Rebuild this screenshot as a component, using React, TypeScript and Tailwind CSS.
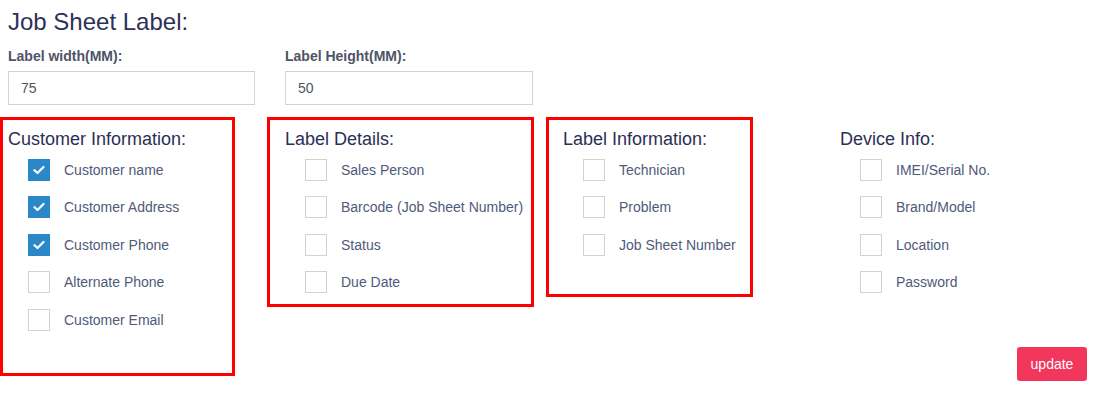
import { useState } from "react";

type Item = { label: string; checked?: boolean };

const customerInfo: Item[] = [
  { label: "Customer name", checked: true },
  { label: "Customer Address", checked: true },
  { label: "Customer Phone", checked: true },
  { label: "Alternate Phone" },
  { label: "Customer Email" },
];

const labelDetails: Item[] = [
  { label: "Sales Person" },
  { label: "Barcode (Job Sheet Number)" },
  { label: "Status" },
  { label: "Due Date" },
];

const labelInformation: Item[] = [
  { label: "Technician" },
  { label: "Problem" },
  { label: "Job Sheet Number" },
];

const deviceInfo: Item[] = [
  { label: "IMEI/Serial No." },
  { label: "Brand/Model" },
  { label: "Location" },
  { label: "Password" },
];

function CheckRow({ item }: { item: Item }) {
  const [checked, setChecked] = useState(!!item.checked);
  return (
    <label
      className="flex h-[37.5px] cursor-pointer items-center"
      onClick={() => setChecked(!checked)}
    >
      <span
        className={`ml-[20px] flex h-[22px] w-[22px] items-center justify-center ${
          checked ? "bg-[#2a88c8]" : "border border-[#d6d1cb] bg-white"
        }`}
      >
        {checked && (
          <svg width="12" height="10" viewBox="0 0 12 10" fill="none">
            <path
              d="M1.5 5.2 L4.5 8 L10.5 2"
              stroke="white"
              strokeWidth="2.2"
              strokeLinecap="round"
              strokeLinejoin="round"
            />
          </svg>
        )}
      </span>
      <span className="ml-[14px] text-[14px] leading-5 text-[#4f5a7a]">{item.label}</span>
    </label>
  );
}

function Group({ title, items }: { title: string; items: Item[] }) {
  return (
    <div>
      <h3 className="mb-[2px] text-[18px] leading-5 text-[#2c2f55]">{title}</h3>
      {items.map((item) => (
        <CheckRow key={item.label} item={item} />
      ))}
    </div>
  );
}

export default function App() {
  return (
    <div
      className="h-[396px] w-[1096px] overflow-hidden bg-white pt-[8px]"
      style={{ fontFamily: '"Liberation Sans", Arial, sans-serif' }}
    >
      <h1 className="pl-[8px] text-[24px] leading-7 text-[#2e3057]">Job Sheet Label:</h1>

      <div className="mt-[10px] flex pl-[8px]">
        <div className="w-[277px]">
          <div className="text-[14px] font-bold leading-5 text-[#4e5466]">Label width(MM):</div>
          <input
            defaultValue="75"
            className="mt-[5px] h-[34px] w-[247px] border border-[#cfd3dc] px-[12px] text-[14px] text-[#555] outline-none"
          />
        </div>
        <div>
          <div className="text-[14px] font-bold leading-5 text-[#4e5466]">Label Height(MM):</div>
          <input
            defaultValue="50"
            className="mt-[5px] h-[34px] w-[248px] border border-[#cfd3dc] px-[12px] text-[14px] text-[#555] outline-none"
          />
        </div>
      </div>

      <div className="mt-[12px] flex items-start">
        <div className="h-[259px] w-[235px] border-[3px] border-[#ff0000] pl-[5px] pt-[9px]">
          <Group title="Customer Information:" items={customerInfo} />
        </div>
        <div className="ml-[32px] h-[190px] w-[267px] border-[3px] border-[#ff0000] pl-[15px] pt-[9px]">
          <Group title="Label Details:" items={labelDetails} />
        </div>
        <div className="ml-[12px] h-[180px] w-[207px] border-[3px] border-[#ff0000] pl-[14px] pt-[9px]">
          <Group title="Label Information:" items={labelInformation} />
        </div>
        <div className="ml-[87px] flex h-[264px] flex-1 flex-col pt-[12px]">
          <Group title="Device Info:" items={deviceInfo} />
          <button className="mr-[9px] mt-auto h-[34px] w-[70px] self-end rounded-[3px] bg-[#f2365c] text-[14px] text-white">
            update
          </button>
        </div>
      </div>
    </div>
  );
}
